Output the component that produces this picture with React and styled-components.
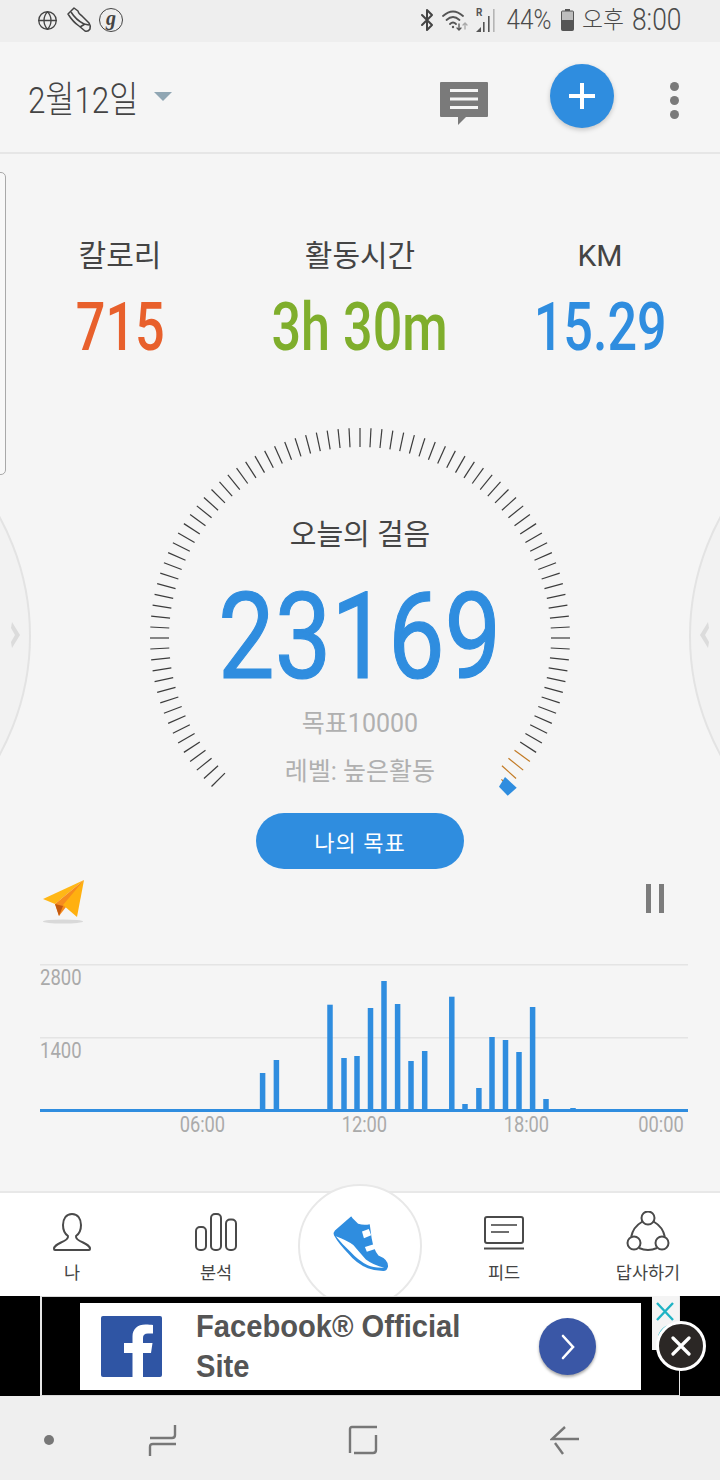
import React from "react";
import styled, { createGlobalStyle } from "styled-components";
import { Globe, Bluetooth } from "lucide-react";

const GlobalStyle = createGlobalStyle`
  html, body {
    margin: 0;
    padding: 0;
    background: #f5f5f5;
  }
  * {
    box-sizing: border-box;
  }
`;

const KR = `Roboto, "Noto Sans CJK KR", sans-serif`;

const Screen = styled.div`
  width: 720px;
  height: 1480px;
  display: flex;
  flex-direction: column;
  overflow: hidden;
  font-family: ${KR};
  background: #f5f5f5;
`;

const Squeeze = styled.span`
  display: inline-block;
  white-space: nowrap;
  transform: scaleX(${(p) => p.$x || 1});
  transform-origin: ${(p) => p.$origin || "center"};
`;

/* status bar */
const StatusBar = styled.div`
  height: 42px;
  flex: none;
  display: flex;
  align-items: center;
  justify-content: space-between;
  padding: 0 38px 2px 37px;
  background: #eeeeee;
  color: #4a4a4a;
`;

const StatusGroup = styled.div`
  display: flex;
  align-items: center;
  gap: ${(p) => p.$gap || 8}px;
`;

const BluetoothMark = styled(Bluetooth)`
  margin-right: -4px;
`;

const GBadge = styled.span`
  width: 24px;
  height: 24px;
  margin-left: -2px;
  border: 1.5px solid #444;
  border-radius: 50%;
  display: flex;
  align-items: center;
  justify-content: center;
  font: italic 700 20px/1 "Liberation Serif", serif;
  padding-bottom: 5px;
  color: #444;
`;

const StatusText = styled.span`
  font-size: ${(p) => p.$size || 27}px;
  font-weight: 300;
  line-height: 30px;
  width: ${(p) => p.$w}px;
  text-align: ${(p) => p.$align || "center"};
  display: block;
  letter-spacing: 0;
`;

/* header */
const Header = styled.header`
  height: 112px;
  flex: none;
  display: flex;
  align-items: center;
  padding: 0 41px 3px 28px;
  background: #f5f5f5;
  border-bottom: 2px solid #e6e6e6;
`;

const DateText = styled.div`
  width: 110px;
  height: 44px;
  font-size: 37px;
  font-weight: 300;
  line-height: 44px;
  color: #444;
  margin-top: 10px;
`;

const Caret = styled.span`
  width: 0;
  height: 0;
  margin: 2px 0 0 16px;
  border-left: 9px solid transparent;
  border-right: 9px solid transparent;
  border-top: 9px solid #90a6b3;
`;

const Spacer = styled.div`
  flex: 1;
`;

const MessageButton = styled.div`
  display: flex;
  margin-top: 17px;
`;

const AddButton = styled.button`
  width: 64px;
  height: 64px;
  margin: 0 56px 0 62px;
  padding: 0;
  border: none;
  border-radius: 50%;
  background: #2f8ddf;
  box-shadow: 0 2px 5px rgba(0, 0, 0, 0.2);
  display: flex;
  align-items: center;
  justify-content: center;
`;

const MenuDots = styled.div`
  display: flex;
  flex-direction: column;
  gap: 5px;
  margin-top: 10px;
`;

const MenuDot = styled.span`
  width: 9px;
  height: 9px;
  border-radius: 50%;
  background: #7a7a7a;
`;

/* main */
const Main = styled.main`
  position: relative;
  flex: 1;
  min-height: 0;
  overflow: hidden;
  padding-top: 82px;
`;

const PeekCard = styled.div`
  position: absolute;
  left: -8px;
  top: 18px;
  width: 14px;
  height: 303px;
  border: 1px solid #a9a9a9;
  border-radius: 5px;
  background: #f8f8f8;
`;

const SideDial = styled.div`
  position: absolute;
  top: 234px;
  width: 496px;
  height: 496px;
  border: 2px solid #e3e3e3;
  border-radius: 50%;
  background: #f2f2f2;
  ${(p) => (p.$side === "left" ? "left: -465px;" : "right: -465px;")}
`;

const SideChevron = styled.svg`
  position: absolute;
  top: 466px;
  width: 12px;
  height: 30px;
  ${(p) => (p.$side === "left" ? "left: 10px;" : "right: 10px;")}
`;

const Stats = styled.section`
  position: relative;
  display: grid;
  grid-template-columns: repeat(3, 240px);
  text-align: center;
`;

const StatLabel = styled.div`
  font-size: 30px;
  font-weight: 400;
  line-height: 40px;
  color: #444;
`;

const StatValue = styled.div`
  margin-top: 17px;
  font-size: 66px;
  font-weight: 500;
  line-height: 70px;
  color: ${(p) => p.$color};
`;

const Gauge = styled.section`
  position: relative;
  margin-top: 65px;
  display: flex;
  flex-direction: column;
  align-items: center;
  padding-top: 87px;
`;

const GaugeDial = styled.svg`
  position: absolute;
  left: 0;
  top: 0;
`;

const GaugeTitle = styled.div`
  font-size: 29px;
  line-height: 40px;
  color: #444;
`;

const GaugeCount = styled.div`
  margin-top: 32px;
  font-size: 120px;
  font-weight: 400;
  line-height: 100px;
  letter-spacing: 0;
  color: #2f8ddf;
  -webkit-text-stroke: 1.2px #2f8ddf;
`;

const GaugeNote = styled.div`
  margin-top: ${(p) => p.$top}px;
  font-size: 25px;
  line-height: 40px;
  color: #b0b0b0;
`;

const GoalButton = styled.button`
  position: relative;
  width: 208px;
  height: 56px;
  margin-top: 21px;
  padding: 0;
  border: none;
  border-radius: 28px;
  background: #2f8ddf;
  color: #fff;
  font-family: ${KR};
  font-size: 22px;
  letter-spacing: 1px;
`;

const ActionRow = styled.div`
  display: flex;
  align-items: flex-start;
  justify-content: space-between;
  height: 42px;
  margin-top: 10px;
  padding: 0 56px 0 42px;
`;

const PauseButton = styled.div`
  display: flex;
  gap: 8px;
  margin-top: 5px;
`;

const PauseBar = styled.span`
  width: 5px;
  height: 29px;
  background: #7c7c7c;
`;

const Chart = styled.section`
  position: relative;
  margin: 43px 32px 0 40px;
  height: 148px;
`;

const ChartLabel = styled.span`
  position: absolute;
  left: 0;
  top: ${(p) => p.$top}px;
  font-size: 22px;
  line-height: 26px;
  color: #aaa;
`;

const TimeAxis = styled.div`
  display: grid;
  grid-template-columns: 162px 162px 162px 1fr;
  padding: 1px 36px 0 121px;
  font-size: 22px;
  line-height: 24px;
  color: #aaa;
`;

const TimeLabel = styled.div`
  text-align: ${(p) => (p.$end ? "right" : "center")};
`;

/* bottom tabs */
const TabBar = styled.nav`
  position: relative;
  height: 105px;
  flex: none;
  display: grid;
  grid-template-columns: repeat(5, 144px);
  background: #fff;
  border-top: 2px solid #e8e8e8;
`;

const Tab = styled.div`
  display: flex;
  flex-direction: column;
  align-items: center;
  padding-top: ${(p) => p.$top || 20}px;
  font-size: 17.5px;
  line-height: 24px;
  color: #444;
`;

const TabLabel = styled.span`
  position: absolute;
  top: 68px;
`;

const ShoeWell = styled.div`
  position: absolute;
  left: 298px;
  top: 1px;
  width: 124px;
  height: 124px;
  border: 2px solid #e8e8e8;
  border-radius: 50%;
  background: #fff;
  display: flex;
  align-items: flex-start;
  justify-content: center;
  padding: 29px 0 0 3px;
`;

const TabClip = styled.div`
  position: absolute;
  inset: -10px 0 0 0;
  overflow: hidden;
  pointer-events: none;
`;

/* ad */
const AdStrip = styled.aside`
  position: relative;
  height: 100px;
  flex: none;
  background: #000;
`;

const AdFrame = styled.div`
  height: 100%;
  margin: 0 40px 0 40px;
  padding: 6px 39px 5px 38px;
  border-left: 2px solid #e6e6e6;
  border-right: 1px solid #e6e6e6;
  border-bottom: 1px solid #d8d8d8;
  border-top: 1px solid #d8d8d8;
`;

const AdCard = styled.div`
  width: 561px;
  height: 87px;
  display: flex;
  align-items: center;
  padding-left: 21px;
  background: #fff;
`;

const AdText = styled.div`
  width: 320px;
  margin-left: 34px;
  font-family: "Liberation Sans", sans-serif;
  font-size: 31px;
  font-weight: 700;
  line-height: 40px;
  color: #555;
`;

const AdArrow = styled.div`
  width: 57px;
  height: 57px;
  margin-left: 23px;
  border-radius: 50%;
  background: #3a57a6;
  box-shadow: 0 2px 3px rgba(0, 0, 0, 0.35);
  display: flex;
  align-items: center;
  justify-content: center;
`;

const AdChoices = styled.div`
  position: absolute;
  left: 652px;
  top: 0;
  width: 27px;
  height: 54px;
  background: #f4f4f4;
  overflow: hidden;
`;

const AdClose = styled.div`
  position: absolute;
  left: 656px;
  top: 25px;
  width: 50px;
  height: 50px;
  border: 3px solid #fff;
  border-radius: 50%;
  background: #2b2725;
  display: flex;
  align-items: center;
  justify-content: center;
`;

/* system nav */
const SystemNav = styled.div`
  flex: none;
  height: 84px;
  padding-top: 4px;
  display: grid;
  grid-template-columns: 98px 130px 210px 1fr;
  align-items: center;
  background: #efefef;
`;

const SystemCell = styled.div`
  display: flex;
  padding-left: ${(p) => p.$left || 0}px;
`;

const SystemDot = styled.span`
  width: 10px;
  height: 10px;
  border-radius: 50%;
  background: #777;
`;

const STATS = [
  { label: "칼로리", value: "715", color: "#e8602c" },
  { label: "활동시간", value: "3h 30m", color: "#7fae2c" },
  { label: "KM", value: "15.29", color: "#2f8ddf" },
];

// [center x inside the chart, top y inside the chart]
const BARS = [
  [222.6, 109], [236.4, 96], [290, 40.7], [304, 94], [317, 92], [330.5, 44],
  [344, 17], [357.6, 40], [371, 97], [384.7, 87], [411.8, 32.7], [425, 140],
  [438.9, 124], [452, 73], [465.5, 76], [479, 88], [492.6, 43], [506, 135],
  [533, 144],
];

const DIAL_TICKS = Array.from({ length: 91 }, (_, i) => -135 + i * 3);

const tickLine = (deg) => {
  const a = (deg * Math.PI) / 180;
  const inner = deg === 135 ? 200 : 191;
  return {
    x1: 360 + inner * Math.sin(a),
    y1: 210 - inner * Math.cos(a),
    x2: 360 + 210 * Math.sin(a),
    y2: 210 - 210 * Math.cos(a),
  };
};

const ShoeOutlineIcon = () => (
  <svg width="25" height="26" viewBox="0 0 25 26" fill="none" stroke="#444" strokeWidth="1.5" strokeLinejoin="round">
    <path d="M1 7 L7 1 L11 4 Q11.5 7 15 9 L22 16 Q24 19 23 22 Q21 25 18 24 L12 19 Q6 15 1 7 Z" />
    <path d="M4 5 Q9 13 17 17 L22 18" />
    <path d="M13 20 L18 17" />
  </svg>
);

const WifiIcon = () => (
  <svg width="27" height="24" viewBox="0 0 27 24" fill="none" stroke="#555" strokeWidth="1.8" strokeLinecap="round">
    <path d="M1 8 Q11 -1 21 8" />
    <path d="M4.5 12 Q11 6 17.5 12" />
    <path d="M8 16 Q11 13 14 16" />
    <circle cx="11" cy="19" r="1.2" fill="#555" stroke="none" />
    <path d="M17 16 V22 M15 20 L17 22 L19 20" strokeWidth="1.3" />
    <path d="M23 21 V15 M21 17 L23 15 L25 17" strokeWidth="1.3" stroke="#aaa" />
  </svg>
);

const SignalIcon = () => (
  <svg width="21" height="26" viewBox="0 0 21 26">
    <text x="0" y="9" fontFamily="Roboto, sans-serif" fontSize="10" fontWeight="700" fill="#555">R</text>
    <path d="M0 25 L5 20 V25 Z" fill="#555" />
    <rect x="7" y="15" width="1.6" height="10" fill="#555" />
    <rect x="12" y="9" width="1.6" height="16" fill="#555" />
    <rect x="17" y="2" width="1.6" height="23" fill="#b5b5b5" />
  </svg>
);

const BatteryIcon = () => (
  <svg width="13" height="22" viewBox="0 0 13 22">
    <rect x="4" y="0" width="5" height="2" fill="#555" />
    <rect x="0.5" y="2" width="12" height="19.5" rx="1" fill="#bdbdbd" stroke="#555" />
    <rect x="0.5" y="11" width="12" height="10.5" rx="1" fill="#555" />
  </svg>
);

const MessageIcon = () => (
  <svg width="48" height="44" viewBox="0 0 48 44">
    <path d="M1 0 H47 Q48 0 48 1 V34 Q48 35 47 35 H26 L18 43 V35 H1 Q0 35 0 34 V1 Q0 0 1 0 Z" fill="#7a7a7a" />
    <rect x="10" y="7" width="28" height="3" fill="#f5f5f5" />
    <rect x="10" y="15.5" width="28" height="3" fill="#f5f5f5" />
    <rect x="10" y="24" width="28" height="3" fill="#f5f5f5" />
  </svg>
);

const PlaneIcon = () => (
  <svg width="44" height="45" viewBox="0 0 44 45">
    <ellipse cx="21" cy="42.5" rx="20" ry="2" fill="#d9d9d9" />
    <path d="M42 1 L1 20 L13 25 Z" fill="#ffb716" />
    <path d="M42 1 L13 25 L17 37 L24 28 Z" fill="#f68c1e" />
    <path d="M13 25 L17 37 L21 27 Z" fill="#c4590f" />
    <path d="M42 1 L21 26 L35 38 Z" fill="#ffb010" />
  </svg>
);

const PersonIcon = () => (
  <svg width="38" height="38" viewBox="0 0 38 38" fill="none" stroke="#4a4a4a" strokeWidth="2" strokeLinejoin="round">
    <path d="M19 1 C13 1 10 6 10 12 C10 17 12 21 15 23 C15.5 26 13 27.5 8 29.5 C4 31.5 1 33 1 36 Q1 37 2 37 H36 Q37 37 37 36 C37 33 34 31.5 30 29.5 C25 27.5 22.5 26 23 23 C26 21 28 17 28 12 C28 6 25 1 19 1 Z" />
  </svg>
);

const BarsIcon = () => (
  <svg width="42" height="38" viewBox="0 0 42 38" fill="none" stroke="#4a4a4a" strokeWidth="2">
    <rect x="1" y="14" width="10" height="23" rx="4" />
    <rect x="16" y="1" width="10" height="36" rx="4" />
    <rect x="31" y="6.5" width="10" height="30.5" rx="4" />
  </svg>
);

const ShoeIcon = () => (
  <svg width="58" height="58" viewBox="0 0 60 60">
    <path d="M18 2 Q19 1 20 3 L26 9 Q32 11 38 9.5 L40 24 Q42 36 47 42 Q57 46 57 53 Q56 58 52 58 Q44 58 36 55 Q24 50 16 40 Q6 30 1 21 Q0 18 2 16 Z" fill="#2f8ddf" />
    <path d="M3 22 Q14 26 21 31 Q27 38 34 46 Q42 52 53 54.5 Q42 55 36 52 Q26 47 18 38 Q10 31 3 22 Z" fill="#fff" />
    <path d="M30 17 L37 14.5 L39.5 21 L32 24 Z" fill="#fff" />
    <path d="M33 33 L43 30 L44.5 35 L35 38 Z" fill="#fff" />
  </svg>
);

const FeedIcon = () => (
  <svg width="40" height="34" viewBox="0 0 40 34" fill="none" stroke="#4a4a4a" strokeWidth="2">
    <rect x="1" y="1" width="38" height="26" rx="2" />
    <path d="M0 32.5 H40" />
    <path d="M7 9 H33" strokeWidth="1.6" />
    <path d="M7 16 H25" strokeWidth="1.6" />
  </svg>
);

const ShareIcon = () => (
  <svg width="44" height="41" viewBox="0 0 44 41" fill="none" stroke="#4a4a4a" strokeWidth="2">
    <circle cx="22" cy="7" r="6.5" />
    <circle cx="8" cy="32" r="6.5" />
    <circle cx="36" cy="32" r="6.5" />
    <path d="M16.5 10.5 Q7 16 5.2 25.8" />
    <path d="M27.5 10.5 Q37 16 38.8 25.8" />
    <path d="M13 37 Q22 41 31 37" />
  </svg>
);

const FacebookIcon = () => (
  <svg width="61" height="61" viewBox="0 0 61 61">
    <rect width="61" height="61" rx="2" fill="#2f55a4" />
    <path d="M42 61 V37 H50 L51.5 27 H42 V22 C42 19 43.5 17.5 47 17.5 H52 V9 C50 8.7 47.5 8.5 44.5 8.5 C36.5 8.5 31.5 13 31.5 20.5 V27 H23 V37 H31.5 V61 Z" fill="#fff" />
  </svg>
);

const RecentsIcon = () => (
  <svg width="30" height="33" viewBox="0 0 30 33" fill="none" stroke="#777" strokeWidth="2.4">
    <path d="M2 14 H24 Q27 14 27 11 V1" />
    <path d="M28 20 H5 Q2 20 2 23 V32" />
  </svg>
);

const HomeIcon = () => (
  <svg width="30" height="30" viewBox="0 0 30 30" fill="none" stroke="#777" strokeWidth="2.4">
    <path d="M29 2 H4 Q2 2 2 4 V28" />
    <path d="M28 10 V25 Q28 28 25 28 H6" />
  </svg>
);

const BackIcon = () => (
  <svg width="30" height="30" viewBox="0 0 30 30" fill="none" stroke="#777" strokeWidth="2.4">
    <path d="M15 2 L2 14 H29" />
    <path d="M5 18 L13 29" />
  </svg>
);

const App = () => {
  return (
    <Screen>
      <GlobalStyle />
      <StatusBar>
        <StatusGroup $gap={9}>
          <Globe size={21} color="#444" strokeWidth={1.5} />
          <ShoeOutlineIcon />
          <GBadge>g</GBadge>
        </StatusGroup>
        <StatusGroup $gap={7}>
          <BluetoothMark size={24} color="#444" strokeWidth={2} />
          <WifiIcon />
          <SignalIcon />
          <StatusText $w={50}>
            <Squeeze $x={0.9}>44%</Squeeze>
          </StatusText>
          <BatteryIcon />
          <StatusText $w={44} $size={24}>
            <Squeeze $x={0.95}>오후</Squeeze>
          </StatusText>
          <StatusText $w={50} $size={31} $align="left">
            <Squeeze $x={0.85} $origin="left">8:00</Squeeze>
          </StatusText>
        </StatusGroup>
      </StatusBar>

      <Header>
        <DateText>
          <Squeeze $x={0.85} $origin="left">2월12일</Squeeze>
        </DateText>
        <Caret />
        <Spacer />
        <MessageButton>
          <MessageIcon />
        </MessageButton>
        <AddButton>
          <svg width="26" height="26" viewBox="0 0 26 26">
            <path d="M11 0 H15 V11 H26 V15 H15 V26 H11 V15 H0 V11 H11 Z" fill="#fff" />
          </svg>
        </AddButton>
        <MenuDots>
          <MenuDot />
          <MenuDot />
          <MenuDot />
        </MenuDots>
      </Header>

      <Main>
        <PeekCard />
        <SideDial $side="left" />
        <SideDial $side="right" />
        <SideChevron $side="left" viewBox="0 0 12 30">
          <path d="M2 2 L10 15 L2 28 L1 22 L5 15 L1 8 Z" fill="#dcdcdc" />
        </SideChevron>
        <SideChevron $side="right" viewBox="0 0 12 30">
          <path d="M10 2 L2 15 L10 28 L11 22 L7 15 L11 8 Z" fill="#dcdcdc" />
        </SideChevron>

        <Stats>
          {STATS.map((stat) => (
            <div key={stat.label}>
              <StatLabel>{stat.label}</StatLabel>
              <StatValue $color={stat.color}>
                <Squeeze $x={0.79}>{stat.value}</Squeeze>
              </StatValue>
            </div>
          ))}
        </Stats>

        <Gauge>
          <GaugeDial width="720" height="380" viewBox="0 0 720 380">
            {DIAL_TICKS.map((deg) => (
              <line
                key={deg}
                {...tickLine(deg)}
                stroke={deg >= 126 ? "#c27a24" : "#3c3c3c"}
                strokeWidth="1.2"
              />
            ))}
            <path d="M505 349 L516.7 359.7 L507.7 367.7 L499 358.7 Z" fill="#2f8ddf" />
          </GaugeDial>
          <GaugeTitle>오늘의 걸음</GaugeTitle>
          <GaugeCount>
            <Squeeze $x={0.84}>23169</Squeeze>
          </GaugeCount>
          <GaugeNote $top={17}>목표10000</GaugeNote>
          <GaugeNote $top={8}>레벨: 높은활동</GaugeNote>
          <GoalButton>나의 목표</GoalButton>
        </Gauge>

        <ActionRow>
          <PlaneIcon />
          <PauseButton>
            <PauseBar />
            <PauseBar />
          </PauseButton>
        </ActionRow>

        <Chart>
          <svg width="648" height="148" viewBox="0 0 648 148">
            <rect x="0" y="0" width="648" height="1.5" fill="#e4e4e4" />
            <rect x="0" y="73" width="648" height="1.5" fill="#e4e4e4" />
            {BARS.map(([x, top]) => (
              <rect key={x} x={x - 2.75} y={top} width="5.5" height={148 - top} fill="#2f8ddf" />
            ))}
            <rect x="0" y="145" width="648" height="3" fill="#2f8ddf" />
          </svg>
          <ChartLabel $top={1}>
            <Squeeze $x={0.84} $origin="left">2800</Squeeze>
          </ChartLabel>
          <ChartLabel $top={74}>
            <Squeeze $x={0.84} $origin="left">1400</Squeeze>
          </ChartLabel>
        </Chart>
        <TimeAxis>
          <TimeLabel><Squeeze $x={0.83}>06:00</Squeeze></TimeLabel>
          <TimeLabel><Squeeze $x={0.83}>12:00</Squeeze></TimeLabel>
          <TimeLabel><Squeeze $x={0.83}>18:00</Squeeze></TimeLabel>
          <TimeLabel $end><Squeeze $x={0.83} $origin="right">00:00</Squeeze></TimeLabel>
        </TimeAxis>
      </Main>

      <TabBar>
        <Tab>
          <PersonIcon />
          <TabLabel>나</TabLabel>
        </Tab>
        <Tab>
          <BarsIcon />
          <TabLabel>분석</TabLabel>
        </Tab>
        <div />
        <Tab $top={23}>
          <FeedIcon />
          <TabLabel>피드</TabLabel>
        </Tab>
        <Tab $top={18}>
          <ShareIcon />
          <TabLabel>답사하기</TabLabel>
        </Tab>
        <TabClip>
          <ShoeWell>
            <ShoeIcon />
          </ShoeWell>
        </TabClip>
      </TabBar>

      <AdStrip>
        <AdFrame>
          <AdCard>
            <FacebookIcon />
            <AdText>
              <Squeeze $x={0.94} $origin="left">Facebook® Official</Squeeze>
              <br />
              <Squeeze $x={0.94} $origin="left">Site</Squeeze>
            </AdText>
            <AdArrow>
              <svg width="16" height="26" viewBox="0 0 16 26" fill="none" stroke="#fff" strokeWidth="2.6" strokeLinecap="round">
                <path d="M3 2 L13 13 L3 24" />
              </svg>
            </AdArrow>
          </AdCard>
        </AdFrame>
        <AdChoices>
          <svg width="27" height="54" viewBox="0 0 27 54" fill="none" stroke="#1fb3c4" strokeWidth="2.4">
            <path d="M5 7 L21 24 M21 7 L5 24" />
            <circle cx="20" cy="43" r="13" />
          </svg>
        </AdChoices>
        <AdClose>
          <svg width="20" height="20" viewBox="0 0 20 20" fill="none" stroke="#fff" strokeWidth="3.2" strokeLinecap="round">
            <path d="M2 2 L18 18 M18 2 L2 18" />
          </svg>
        </AdClose>
      </AdStrip>

      <SystemNav>
        <SystemCell $left={44}>
          <SystemDot />
        </SystemCell>
        <SystemCell $left={50}>
          <RecentsIcon />
        </SystemCell>
        <SystemCell $left={120}>
          <HomeIcon />
        </SystemCell>
        <SystemCell $left={112}>
          <BackIcon />
        </SystemCell>
      </SystemNav>
    </Screen>
  );
};

export default App;
